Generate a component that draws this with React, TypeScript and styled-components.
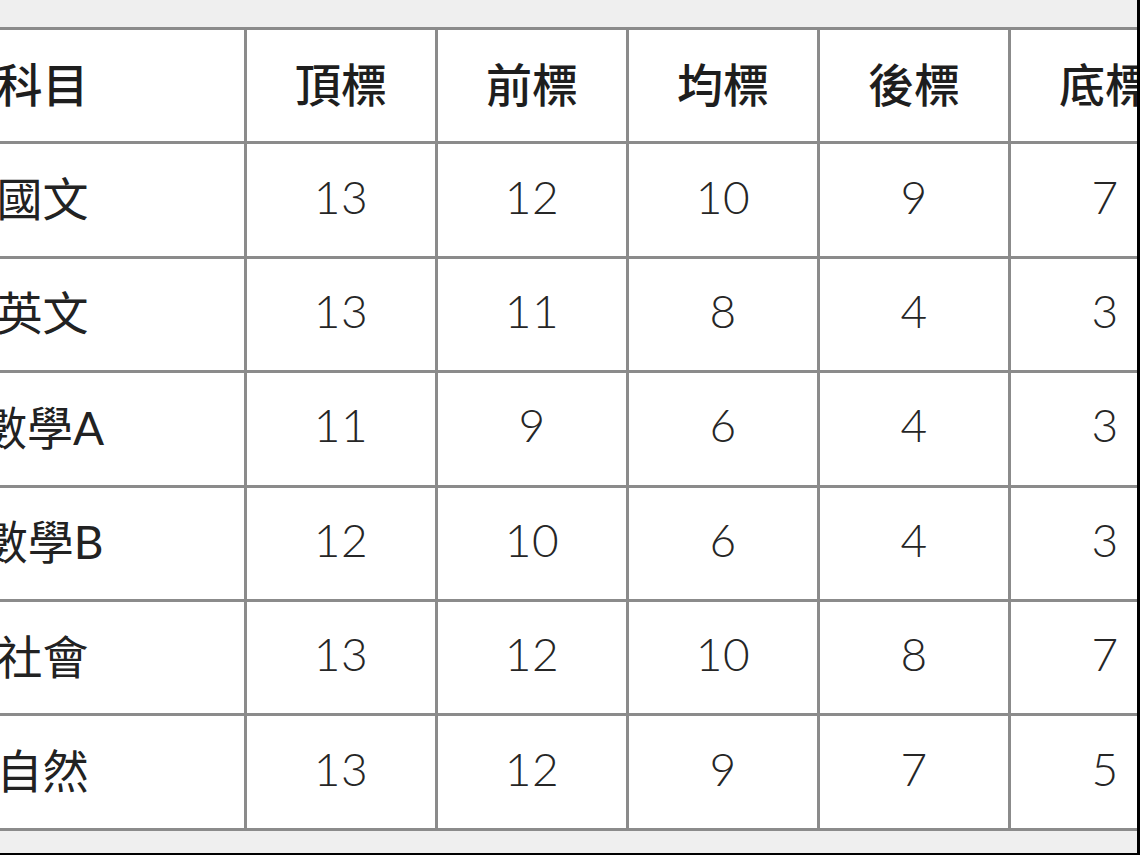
import React from "react";
import styled, { createGlobalStyle } from "styled-components";

const GlobalStyle = createGlobalStyle`
  html, body {
    margin: 0;
    padding: 0;
    background: #000;
  }
`;

const Frame = styled.div`
  width: 1137px;
  height: 853px;
  overflow: hidden;
  background: #efefef;
  padding-top: 27px;
  box-sizing: border-box;
`;

const Sheet = styled.div`
  display: grid;
  grid-template-columns: 403px repeat(5, 188px);
  grid-auto-rows: 111.4px;
  gap: 3px;
  padding: 3px;
  width: max-content;
  margin-left: -162px;
  background: #8b8b8b;
  font-family: Lato, "Noto Sans CJK TC", sans-serif;
  font-size: 46px;
`;

const Cell = styled.div`
  background: #fff;
  display: flex;
  align-items: center;
  justify-content: center;
  padding-bottom: 8px;
  box-sizing: border-box;
  white-space: nowrap;
  font-weight: 300;
  color: #262626;
  letter-spacing: 0.5px;
`;

const HeadCell = styled(Cell)`
  font-weight: 500;
  color: #1e1e1e;
  letter-spacing: 0;
`;

const SubjectCell = styled(Cell)`
  font-weight: 400;
  color: #222;
  letter-spacing: 0;
`;

const headers = ["科目", "頂標", "前標", "均標", "後標", "底標"];

const rows: [string, number[]][] = [
  ["國文", [13, 12, 10, 9, 7]],
  ["英文", [13, 11, 8, 4, 3]],
  ["數學A", [11, 9, 6, 4, 3]],
  ["數學B", [12, 10, 6, 4, 3]],
  ["社會", [13, 12, 10, 8, 7]],
  ["自然", [13, 12, 9, 7, 5]],
];

export default function App() {
  return (
    <>
      <GlobalStyle />
      <Frame>
        <Sheet>
          {headers.map((h) => (
            <HeadCell key={h}>{h}</HeadCell>
          ))}
          {rows.map(([subject, marks]) => (
            <React.Fragment key={subject}>
              <SubjectCell>{subject}</SubjectCell>
              {marks.map((m, i) => (
                <Cell key={i}>{m}</Cell>
              ))}
            </React.Fragment>
          ))}
        </Sheet>
      </Frame>
    </>
  );
}
